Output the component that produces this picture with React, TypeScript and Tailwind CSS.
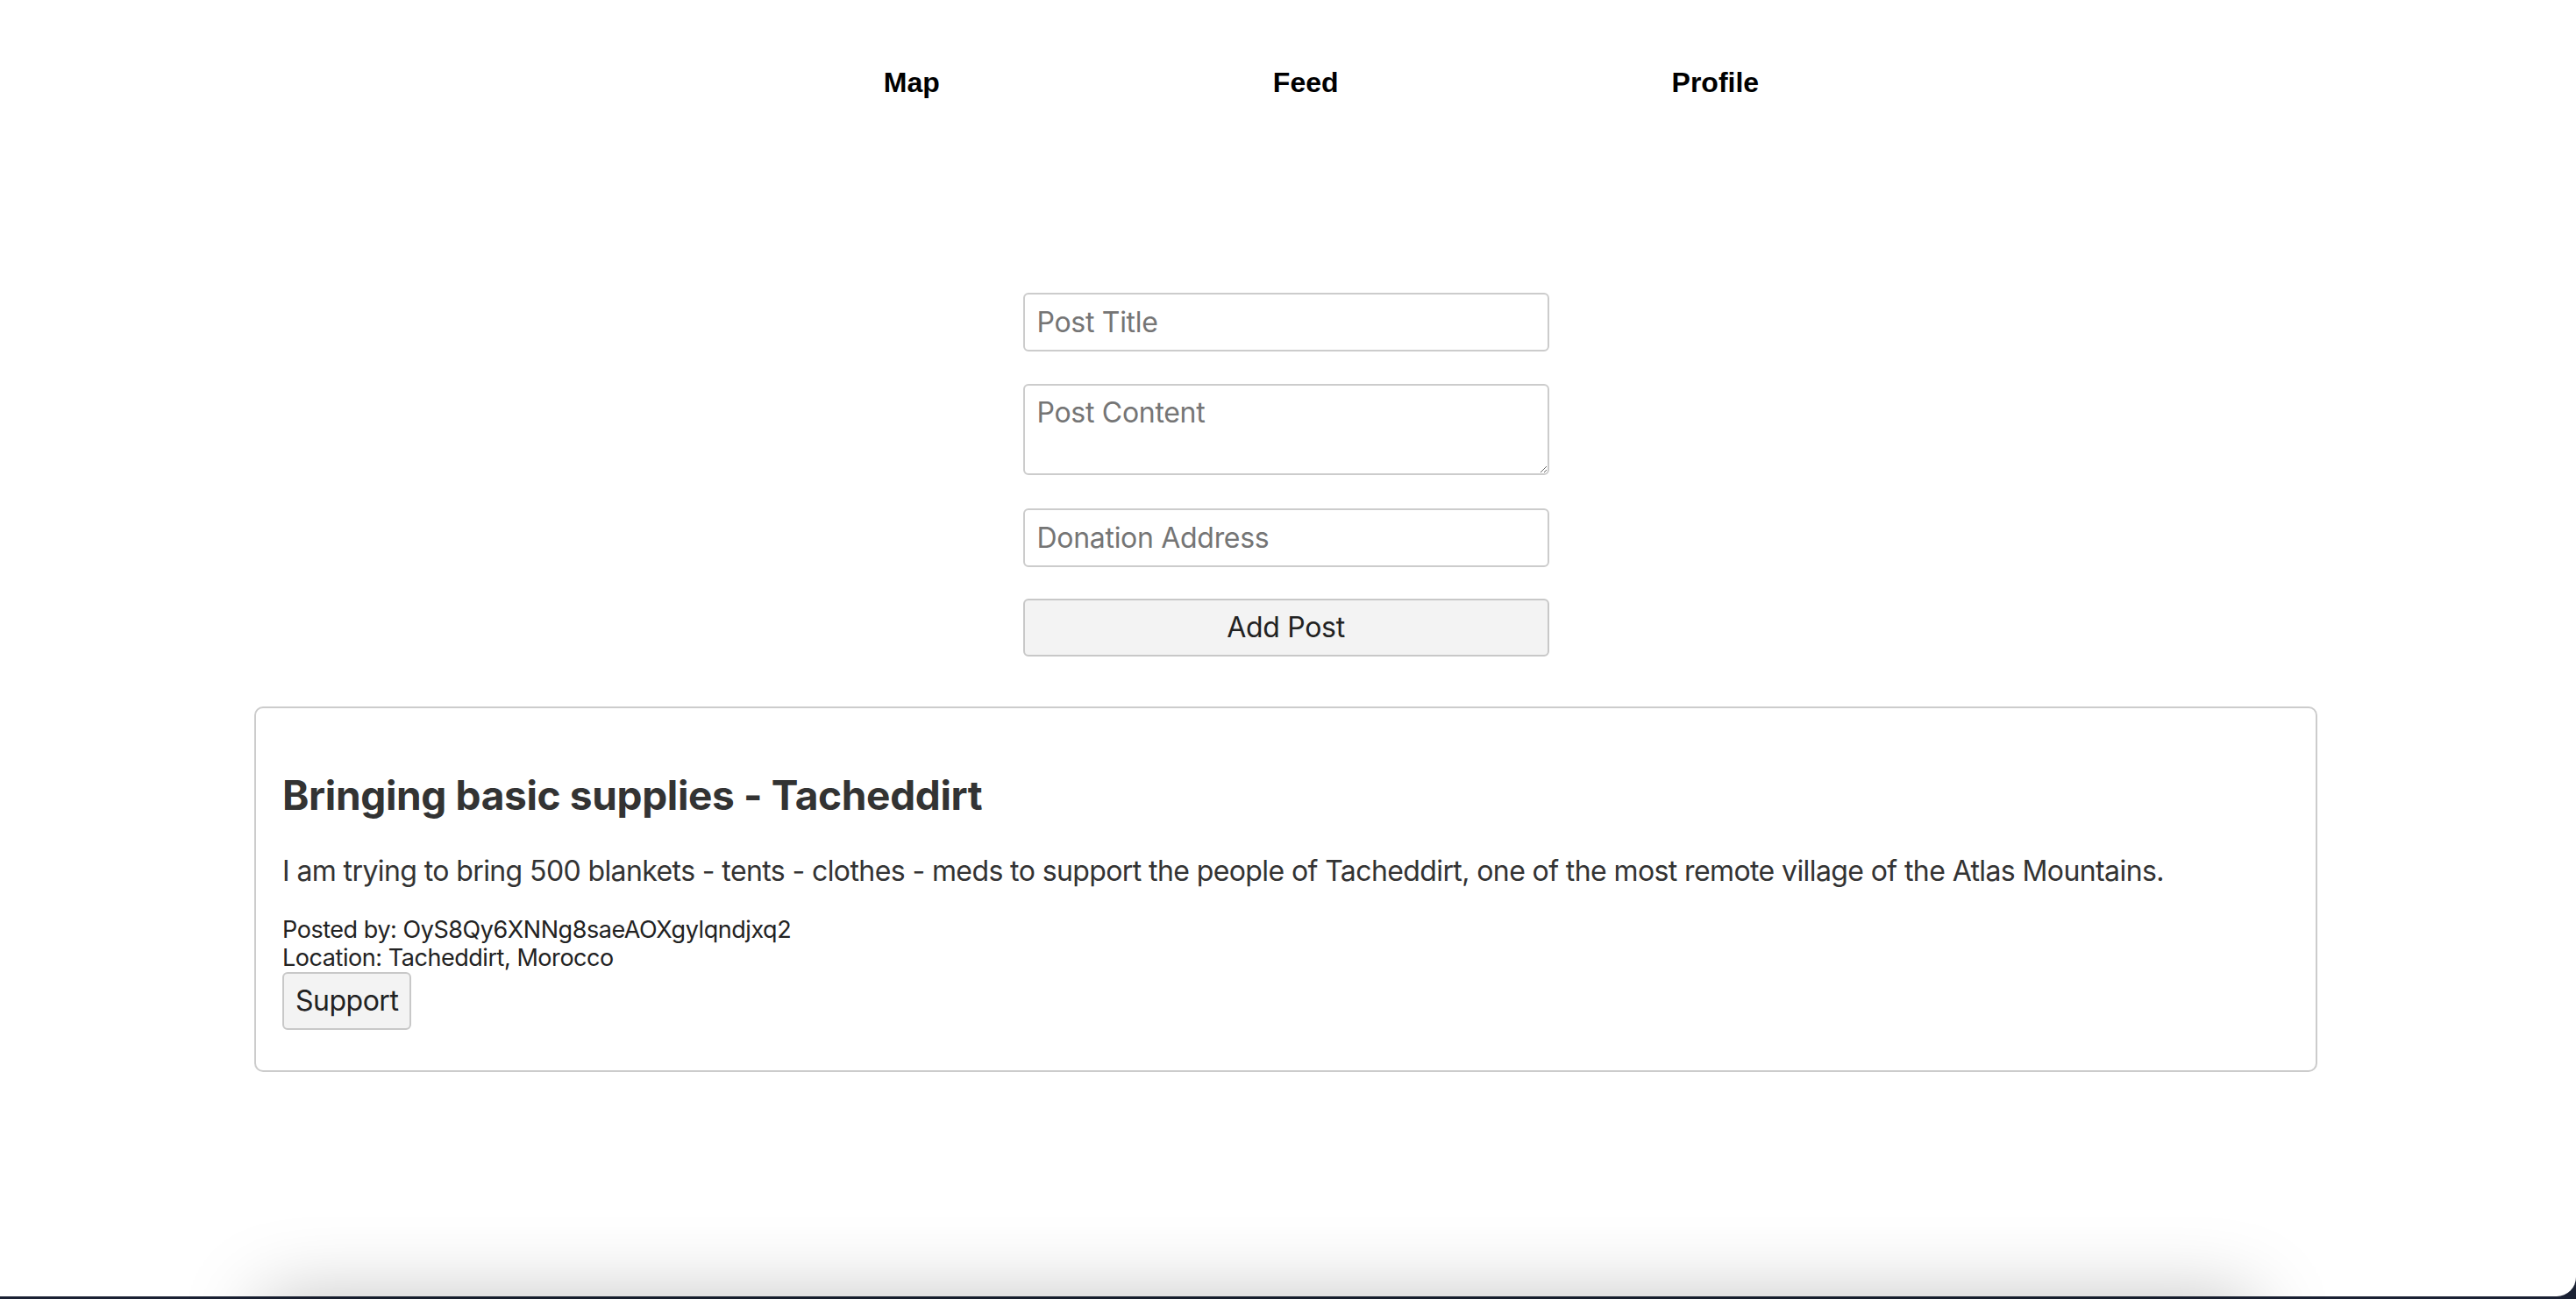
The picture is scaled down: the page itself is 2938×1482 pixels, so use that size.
import React from "react";

const sans = { fontFamily: "Inter, 'Noto Sans', sans-serif" };

export default function App() {
  return (
    <div className="relative h-[1482px] w-full overflow-hidden bg-[#1a2133]">
      <div
        className="relative h-[1479px] w-full rounded-br-[22px] bg-white text-[#333]"
        style={sans}
      >
        <nav className="pt-[76px]">
          <ul
            className="flex justify-center gap-[380px] pl-[76px] text-[32px] font-bold leading-[37px] text-black"
            style={{ fontFamily: "'Liberation Sans', Arial, sans-serif" }}
          >
            <li>Map</li>
            <li>Feed</li>
            <li>Profile</li>
          </ul>
        </nav>

        <div className="mt-[221px] flex justify-center pr-[5px]">
          <form className="flex w-[600px] flex-col">
            <input
              type="text"
              placeholder="Post Title"
              className="h-[67px] rounded-[6px] border-2 border-[#cccccc] px-[14px] text-[32px] tracking-[-0.3px] text-[#222] outline-none placeholder:text-[#757575]"
            />
            <textarea
              placeholder="Post Content"
              className="mt-[37px] h-[104px] resize-y rounded-[6px] border-2 border-[#cccccc] px-[14px] py-[12px] text-[32px] leading-[38px] tracking-[-0.3px] text-[#222] outline-none placeholder:text-[#757575]"
            />
            <input
              type="text"
              placeholder="Donation Address"
              className="mt-[38px] h-[67px] rounded-[6px] border-2 border-[#cccccc] px-[14px] text-[32px] tracking-[-0.3px] text-[#222] outline-none placeholder:text-[#757575]"
            />
            <button
              type="button"
              className="mt-[36px] h-[66px] rounded-[6px] border-2 border-[#c8c8c8] bg-[#f3f3f3] text-[32px] tracking-[-0.3px] text-[#222]"
            >
              Add Post
            </button>
          </form>
        </div>

        <div className="ml-[290px] mt-[57px] w-[2353px] rounded-[10px] border-2 border-[#cccccc] px-[30px] pb-[46px] pt-[71px]">
          <h2 className="text-[46px] font-bold leading-[56px] tracking-[-0.35px] text-[#333]">
            Bringing basic supplies - Tacheddirt
          </h2>
          <p className="mt-[39px] text-[32px] leading-[39px] tracking-[-0.6px] text-[#333]">
            I am trying to bring 500 blankets - tents - clothes - meds to support the people of Tacheddirt, one of the most remote village of the Atlas Mountains.
          </p>
          <div className="mt-[32px] text-[27px] leading-[32px] tracking-[-0.45px] text-[#222]">
            <div>Posted by: OyS8Qy6XNNg8saeAOXgylqndjxq2</div>
            <div>Location: Tacheddirt, Morocco</div>
          </div>
          <button
            type="button"
            className="h-[66px] rounded-[6px] border-2 border-[#c8c8c8] bg-[#f3f3f3] px-[13px] text-[32px] tracking-[-0.5px] text-[#222]"
          >
            Support
          </button>
        </div>

        <div className="pointer-events-none absolute left-[300px] right-[370px] top-[1482px] h-[100px] shadow-[0_0_90px_rgba(0,0,0,0.25)]" />
      </div>
    </div>
  );
}
